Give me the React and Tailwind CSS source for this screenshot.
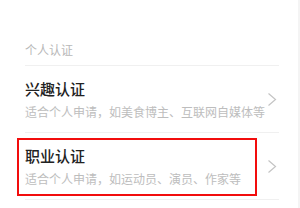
import React from "react";

const items = [
  { title: "兴趣认证", desc: "适合个人申请，如美食博主、互联网自媒体等" },
  { title: "职业认证", desc: "适合个人申请，如运动员、演员、作家等" },
];

function Chevron() {
  return (
    <svg width="10" height="15" viewBox="0 0 10 15" fill="none" className="mr-[2px] shrink-0">
      <path d="M1.5 1.5 L8.5 7.5 L1.5 13.5" stroke="#c4c4c4" strokeWidth="1.2" />
    </svg>
  );
}

export default function App() {
  return (
    <div
      className="relative w-[300px] h-[208px] overflow-hidden bg-white border-r-2 border-[#f4f4f4]"
      style={{ fontFamily: '"Noto Sans CJK SC", "Noto Sans", sans-serif' }}
    >
      <div className="pl-[25px] pr-[19px]">
        <div className="pt-[41px] pb-[6px] text-[12px] leading-[18px] text-[#b8b8b8]">个人认证</div>
        <div className="h-px bg-[#f0f0f0]" />

        {items.map((item) => (
          <div key={item.title}>
            <div className="h-[66px] flex items-center justify-between">
              <div className="flex flex-col gap-[5px]">
                <div className="text-[15px] leading-[20px] font-medium text-[#222]">{item.title}</div>
                <div className="text-[12px] leading-[16px] text-[#bdbdbd]">{item.desc}</div>
              </div>
              <Chevron />
            </div>
            <div className="h-px bg-[#f0f0f0]" />
          </div>
        ))}
      </div>

      {/* red highlight box */}
      <div className="absolute left-[17px] top-[138px] w-[240px] h-[58px] border-2 border-[#f20d0d]" />
    </div>
  );
}
